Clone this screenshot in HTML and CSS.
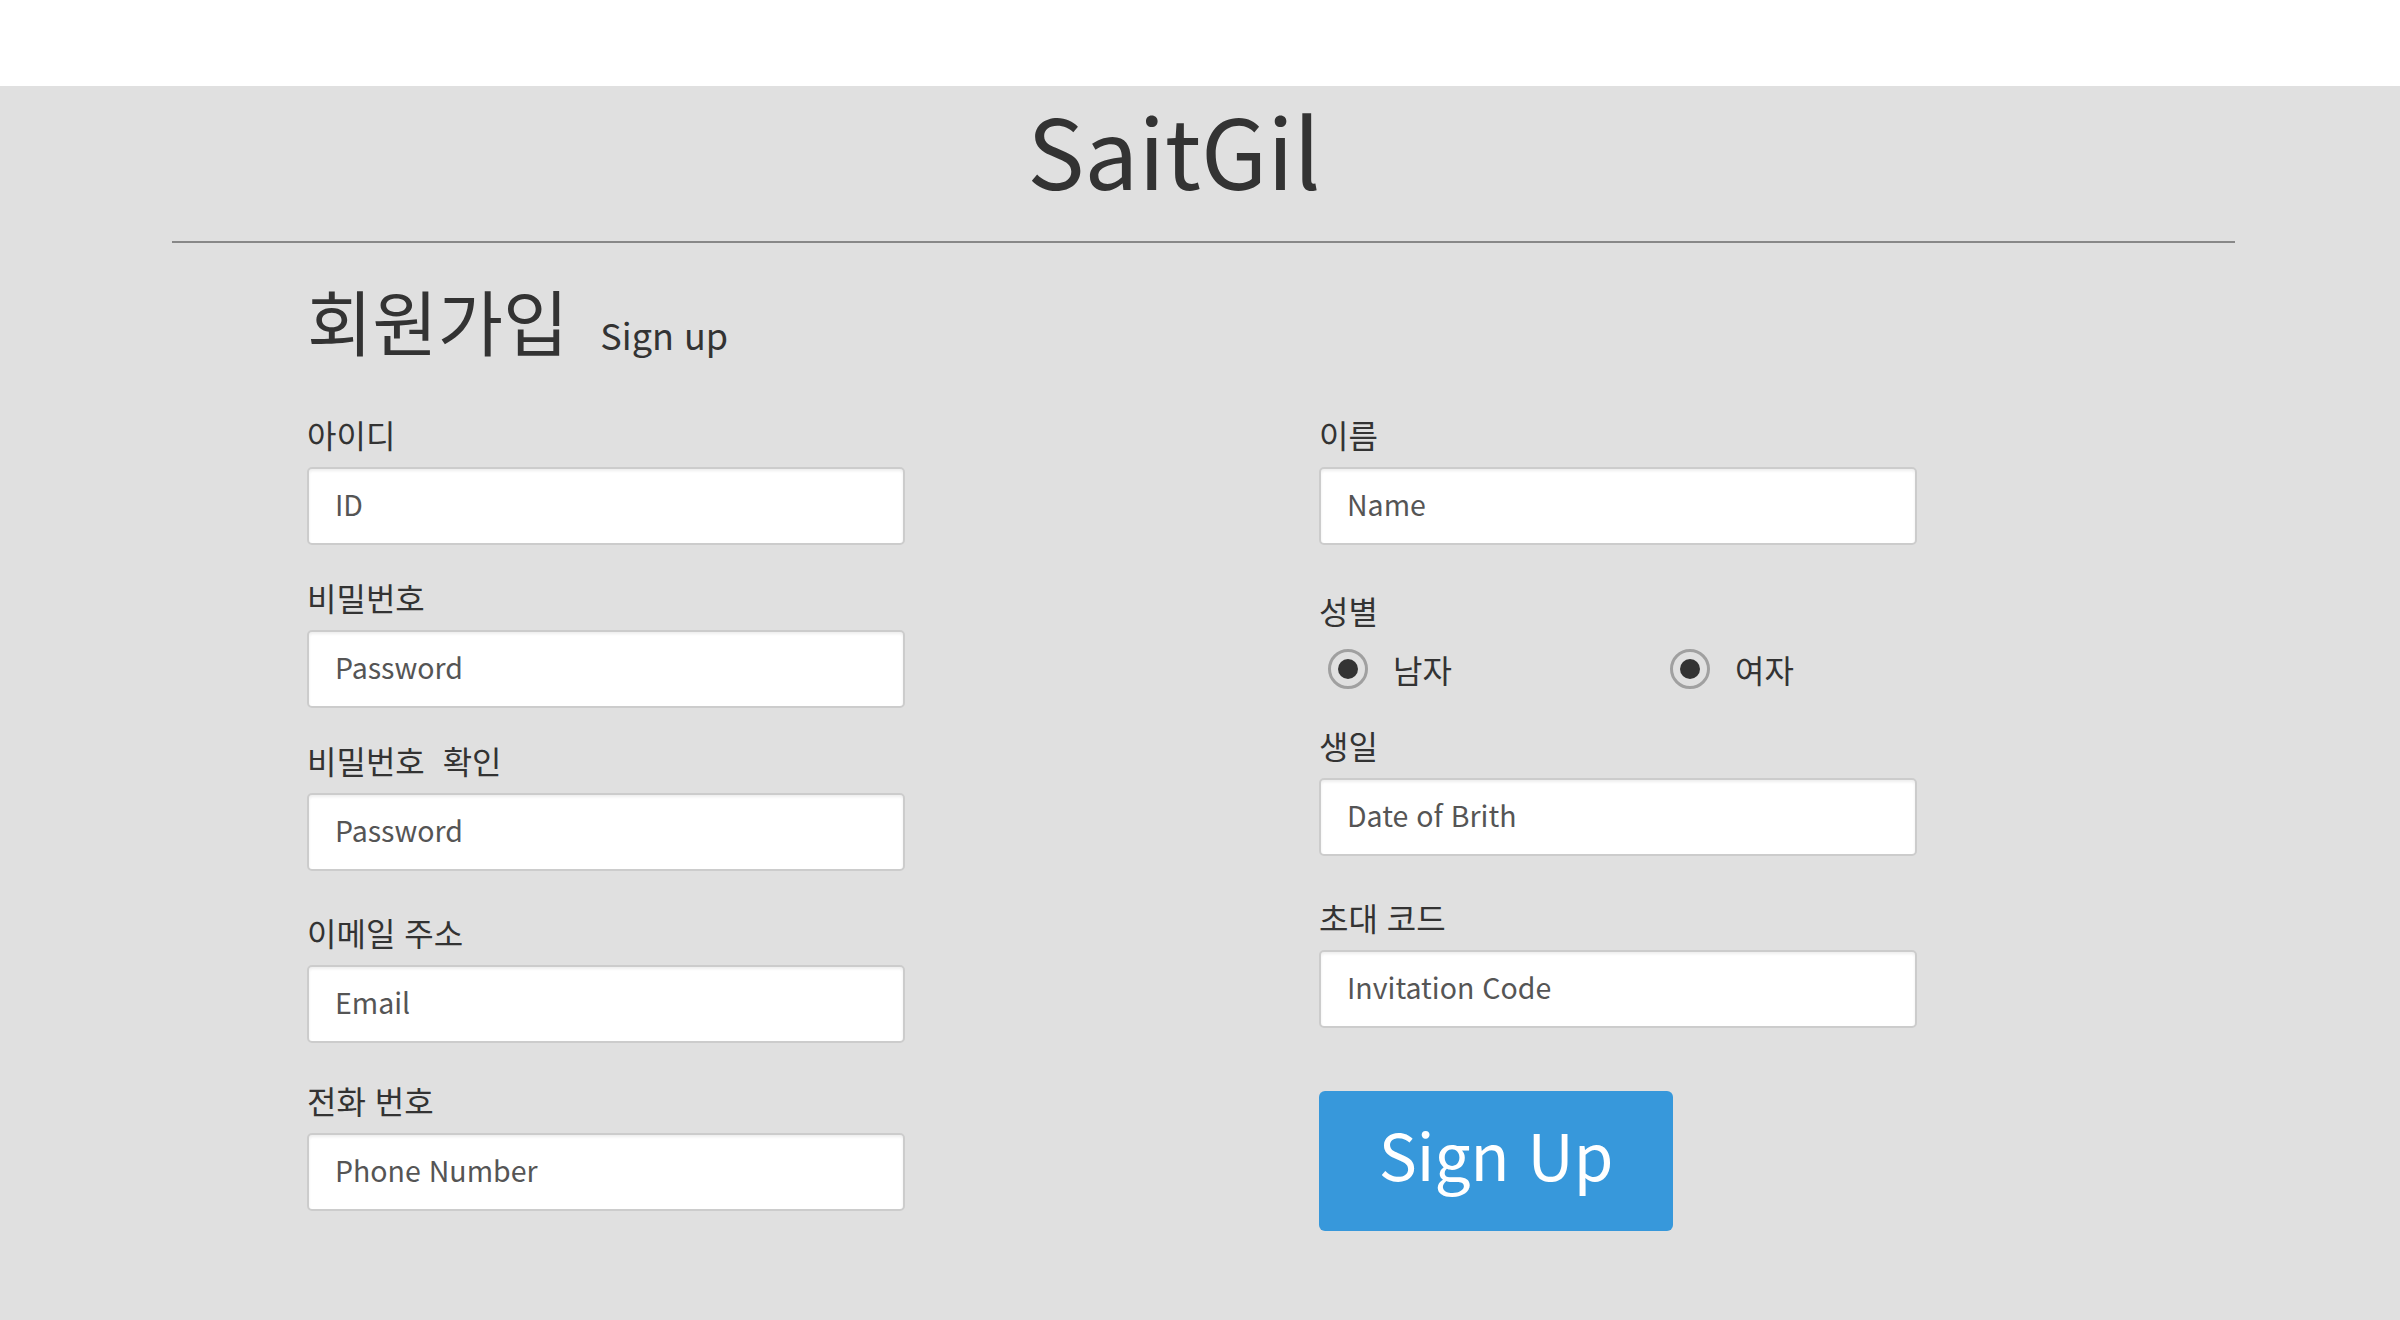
FILE: index.html
```html
<!DOCTYPE html>
<html lang="ko">
<head>
<meta charset="utf-8">
<title>SaitGil - 회원가입</title>
<link rel="stylesheet" href="styles.css">
</head>
<body>
<header class="topbar"></header>
<main class="page">
  <h1 class="brand">SaitGil</h1>
  <hr class="divider">
  <section class="signup">
    <h2 class="heading">회원가입<small class="heading-sub">Sign up</small></h2>
    <form class="form-grid">
      <div class="col">
        <div class="field">
          <label class="field-label">아이디</label>
          <input class="text-input" type="text" placeholder="ID">
        </div>
        <div class="field">
          <label class="field-label">비밀번호</label>
          <input class="text-input" type="password" placeholder="Password">
        </div>
        <div class="field">
          <label class="field-label">비밀번호 &nbsp;확인</label>
          <input class="text-input" type="password" placeholder="Password">
        </div>
        <div class="field field-email">
          <label class="field-label">이메일 주소</label>
          <input class="text-input" type="email" placeholder="Email">
        </div>
        <div class="field field-phone">
          <label class="field-label">전화 번호</label>
          <input class="text-input" type="tel" placeholder="Phone Number">
        </div>
      </div>
      <div class="col">
        <div class="field">
          <label class="field-label">이름</label>
          <input class="text-input" type="text" placeholder="Name">
        </div>
        <div class="field field-gender">
          <label class="field-label">성별</label>
          <div class="radio-row">
            <label class="radio-option"><input class="radio" type="radio" name="g1" checked><span>남자</span></label>
            <label class="radio-option"><input class="radio" type="radio" name="g2" checked><span>여자</span></label>
          </div>
        </div>
        <div class="field field-birth">
          <label class="field-label">생일</label>
          <input class="text-input" type="text" placeholder="Date of Brith">
        </div>
        <div class="field field-invite">
          <label class="field-label">초대 코드</label>
          <input class="text-input" type="text" placeholder="Invitation Code">
        </div>
        <button class="submit" type="button">Sign Up</button>
      </div>
    </form>
  </section>
</main>
</body>
</html>
```
FILE: styles.css
```css
html, body {
  margin: 0;
  padding: 0;
}
body {
  background: #ffffff;
  font-family: "Noto Sans CJK KR", "Noto Sans", sans-serif;
  color: #333333;
}
.topbar {
  height: 86px;
  background: #ffffff;
}
.page {
  background: #e0e0e0;
  min-height: 1234px;
  padding-top: 13px;
  box-sizing: border-box;
}
.brand {
  margin: 0;
  padding-right: 52px;
  text-align: center;
  font-size: 96px;
  line-height: 100px;
  font-weight: 400;
  color: #333333;
}
.divider {
  margin: 42px 165px 0 172px;
  border: 0;
  height: 2px;
  background: #888888;
}
.signup {
  padding-left: 307px;
}
.heading {
  margin: 0;
  padding-top: 36px;
  font-size: 71px;
  line-height: 80px;
  font-weight: 400;
  color: #333333;
}
.heading-sub {
  font-size: 36px;
  line-height: 40px;
  margin-left: 32px;
}
.form-grid {
  display: grid;
  grid-template-columns: 598px 598px;
  column-gap: 414px;
  margin-top: 56px;
}
.col {
  display: flex;
  flex-direction: column;
  align-items: flex-start;
}
.field {
  display: flex;
  flex-direction: column;
  width: 598px;
}
.field + .field {
  margin-top: 33px;
}
.field.field-email {
  margin-top: 42px;
}
.field.field-phone {
  margin-top: 38px;
}
.field.field-gender {
  margin-top: 46px;
}
.field.field-birth {
  margin-top: 37px;
}
.field.field-invite {
  margin-top: 42px;
}
.field-label {
  font-size: 32px;
  line-height: 38px;
  margin-bottom: 14px;
  color: #333333;
}
.text-input {
  width: 598px;
  height: 78px;
  box-sizing: border-box;
  border: 2px solid #cccccc;
  border-radius: 5px;
  background: #ffffff;
  box-shadow: inset 0 2px 3px rgba(0, 0, 0, 0.07);
  padding: 0 26px 6px;
  font-family: inherit;
  font-size: 28.5px;
  color: #555555;
  outline: none;
}
.text-input::placeholder {
  color: #555555;
  opacity: 1;
}
.radio-row {
  display: grid;
  grid-template-columns: 342px auto;
  padding-left: 9px;
  margin-top: 6px;
}
.radio-option {
  display: flex;
  align-items: center;
  gap: 25px;
  font-size: 32px;
  line-height: 40px;
}
.radio {
  appearance: none;
  -webkit-appearance: none;
  margin: 0;
  width: 40px;
  height: 40px;
  border-radius: 50%;
  border: 3px solid #a0a0a0;
  box-sizing: border-box;
  display: grid;
  place-items: center;
  background: transparent;
}
.radio::after {
  content: "";
  width: 20px;
  height: 20px;
  border-radius: 50%;
  background: #333333;
}
.submit {
  margin-top: 63px;
  width: 354px;
  height: 140px;
  border: 0;
  border-radius: 6px;
  background: #3798db;
  color: #ffffff;
  font-family: inherit;
  font-size: 64px;
  line-height: 1;
  padding: 0 0 16px;
}
```
